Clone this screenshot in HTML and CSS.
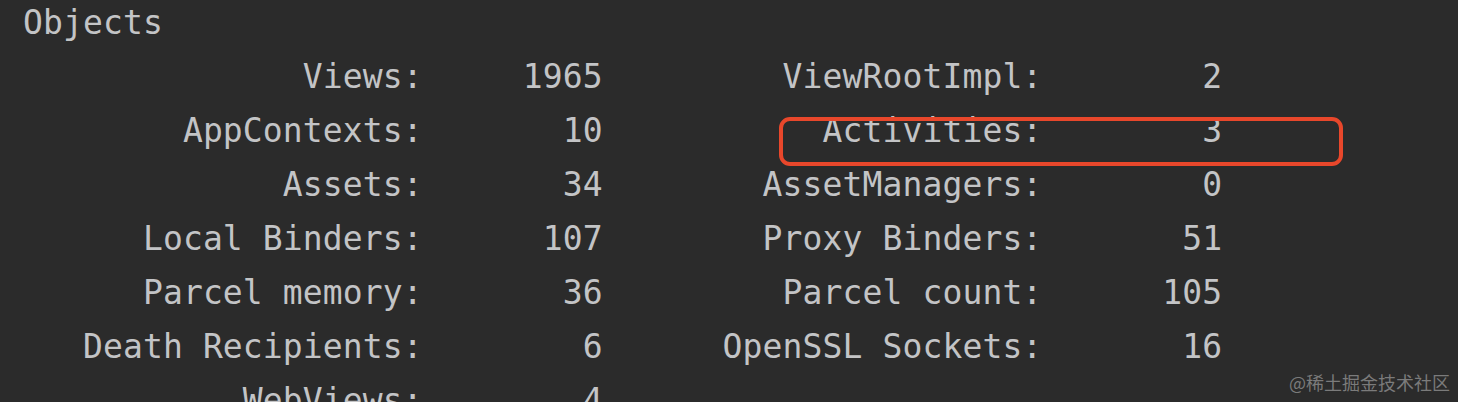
FILE: index.html
```html
<!DOCTYPE html>
<html lang="en">
<head>
<meta charset="utf-8">
<title>Objects</title>
<link rel="stylesheet" href="styles.css">
</head>
<body>
<div class="console">
<pre class="output"> Objects
               Views:     1965         ViewRootImpl:        2
         AppContexts:       10           Activities:        3
              Assets:       34        AssetManagers:        0
       Local Binders:      107        Proxy Binders:       51
       Parcel memory:       36         Parcel count:      105
    Death Recipients:        6      OpenSSL Sockets:       16
            WebViews:        4</pre>
<div class="highlight"></div>
<div class="watermark">@稀土掘金技术社区</div>
</div>
</body>
</html>
```

FILE: styles.css
```css
html, body {
  margin: 0;
  padding: 0;
  background: #2b2b2b;
  overflow: hidden;
}

.console {
  position: relative;
  width: 1458px;
  height: 402px;
  overflow: hidden;
  background: #2b2b2b;
}

.output {
  margin: -4px 0 0 3px;
  font-family: "DejaVu Sans Mono", "Liberation Mono", monospace;
  font-size: 33px;
  letter-spacing: 0.12px;
  line-height: 54px;
  color: #c3c4c6;
  white-space: pre;
}

.highlight {
  position: absolute;
  left: 779px;
  top: 117px;
  width: 556px;
  height: 41px;
  border: 4.5px solid #e8472b;
  border-radius: 11px;
}

.watermark {
  position: absolute;
  right: 8px;
  bottom: 8px;
  font-family: "Noto Sans CJK SC", "Noto Sans", sans-serif;
  font-size: 18px;
  line-height: 24px;
  color: rgba(150, 150, 150, 0.75);
}
```
